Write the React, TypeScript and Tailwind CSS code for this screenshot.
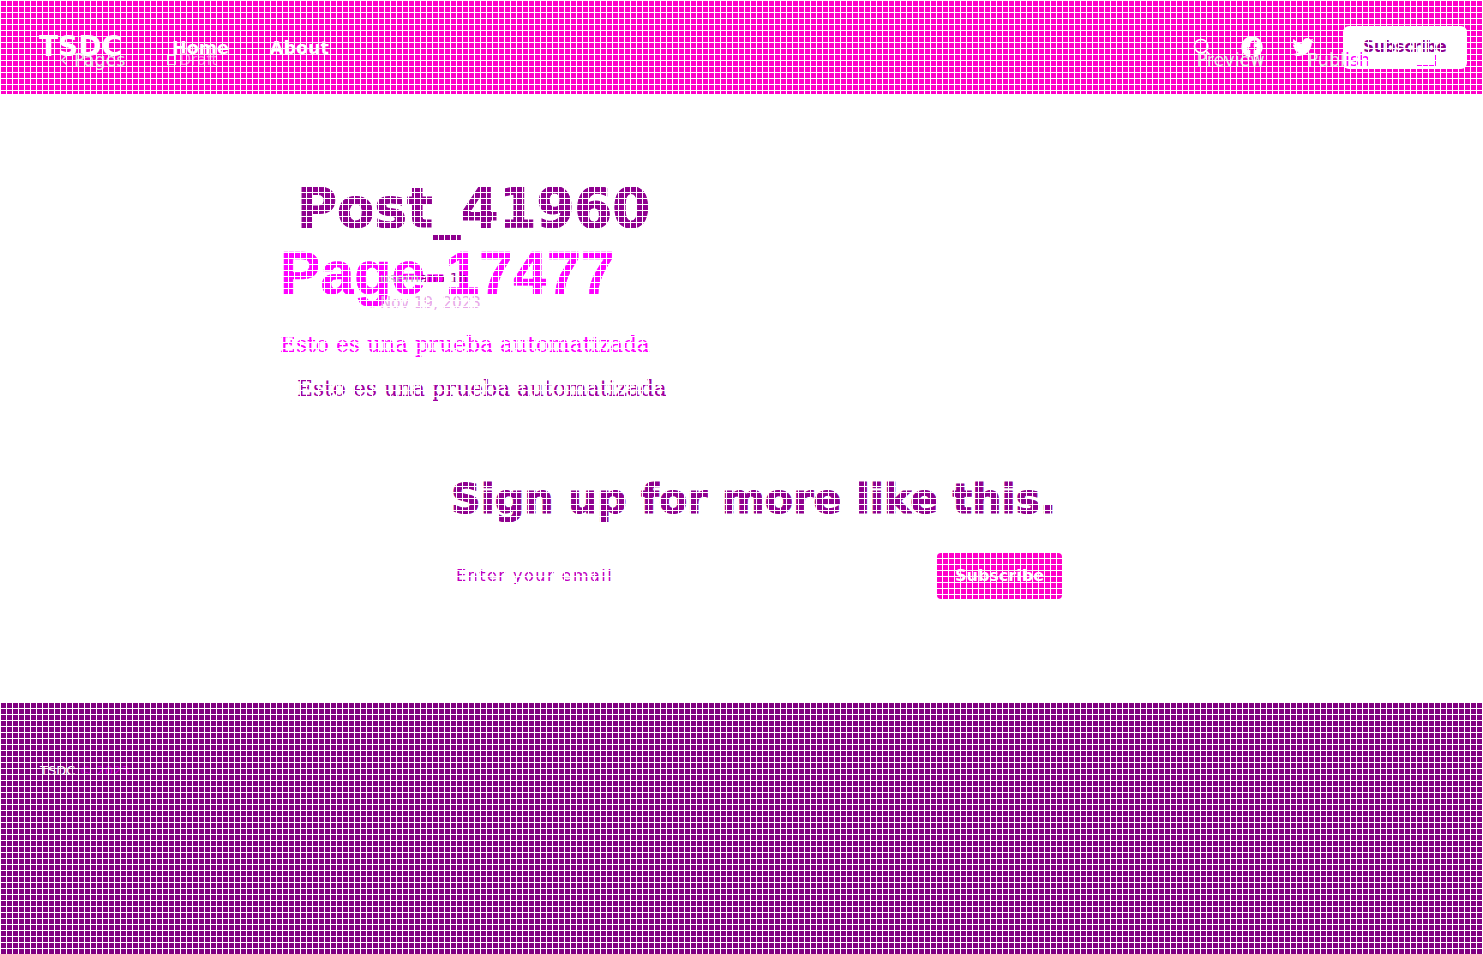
import React from "react";
import { Search, ChevronLeft } from "lucide-react";
import { FaFacebook, FaTwitter } from "react-icons/fa";

const sans = "font-['DejaVu_Sans',sans-serif]";
const serif = "font-['DejaVu_Serif',serif]";

function Published() {
  return (
    <div className={`flex min-h-[954px] flex-col bg-white ${sans}`}>
      <header className="flex h-[94px] items-center bg-[#ff00c8] pl-[39px] pr-[16px] text-white">
        <div className="text-[28px] font-bold leading-none">TSDC</div>
        <nav className="ml-[50px] mt-[3px] flex gap-[41px] text-[17.5px] font-bold">
          <span>Home</span>
          <span>About</span>
        </nav>
        <div className="ml-auto flex items-center gap-[29px]">
          <Search size={20} />
          <FaFacebook size={22} />
          <FaTwitter size={22} />
          <button className="flex h-[43px] w-[124px] items-center justify-center rounded-[6px] bg-white text-[15px] font-bold text-[#8f008f]">Subscribe</button>
        </div>
      </header>
      <main className="flex flex-1 flex-col">
        <article className="pl-[297px] pt-[84px]">
          <h1 className="text-[54.6px] font-bold leading-[60px] text-[#8f008f] [-webkit-text-stroke:1px_#8f008f]">Post_41960</h1>
          <p className={`mt-[136px] text-[21.8px] leading-[30px] text-[#a000a0] ${serif}`}>Esto es una prueba automatizada</p>
        </article>
        <section className="mt-[71px] flex flex-col items-start pl-[451px]">
          <h2 className="text-[41.2px] font-bold leading-[48px] text-[#8f008f] [-webkit-text-stroke:1px_#8f008f]">Sign up for more like this.</h2>
          <div className="ml-[5px] mt-[30px] flex w-[606px] items-center justify-between">
            <span className="text-[16px] tracking-[1.5px] text-[#c000c0]">Enter your email</span>
            <button className="flex h-[46px] w-[125px] items-center justify-center rounded-[4px] bg-[#ff00c8] text-[16px] font-bold text-white">Subscribe</button>
          </div>
        </section>
      </main>
      <footer className="h-[251px] bg-[#800080] pl-[40px] pt-[58px] text-[13px]">
        <span className="text-white">TSDC</span> <span className="text-[#c000c0]">© 2023</span>
      </footer>
    </div>
  );
}

function Editor() {
  return (
    <div className={`pointer-events-none absolute inset-0 ${sans}`}>
      <div className="flex h-[94px] items-center pl-[56px] pr-[47px] pt-[26px] text-[17.5px] text-[#e0e0e0]">
        <ChevronLeft size={16} />
        <span className="ml-[2px]">Pages</span>
        <span className="ml-[42px] h-[10px] w-[9px] border border-current" />
        <span className="ml-[3px] text-[15px] text-[#ff90e4]">Draft</span>
        <span className="ml-auto">Preview</span>
        <span className="ml-[43px]">Publ<span className="text-[#ff00ff]">ish</span></span>
        <span className="ml-[46px] flex h-[12px] w-[20px] border border-[#ff00ff]" />
      </div>
      <div className="pl-[280px] pt-[146px]">
        <div className="font-['Liberation_Sans',sans-serif] text-[60.8px] font-bold leading-[66px] text-[#ff00ff] [-webkit-text-stroke:0.6px_#ff00ff]">Page-17477</div>
        <div className="-mt-[37px] pl-[100px] text-[14px] leading-[18px]">
          <span className="text-[#b8b8b8]">usern</span><span className="text-[#8f008f]">ano 1h</span>
        </div>
        <div className="mt-[7px] pl-[100px] text-[15px] leading-[18px] text-[#e8a8e8]">Nov 19, 2023</div>
        <div className={`mt-[18px] text-[21.8px] leading-[30px] text-[#ff00ff] ${serif}`}>Esto es una prueba automatizada</div>
      </div>
    </div>
  );
}

export default function App() {
  return (
    <div className="relative min-h-[954px] overflow-hidden">
      <Published />
      <Editor />
      <div className="pointer-events-none absolute inset-0 bg-[linear-gradient(to_right,#fff_1px,transparent_1px),linear-gradient(to_bottom,#fff_1px,transparent_1px)] bg-[length:6px_6px]" />
    </div>
  );
}
